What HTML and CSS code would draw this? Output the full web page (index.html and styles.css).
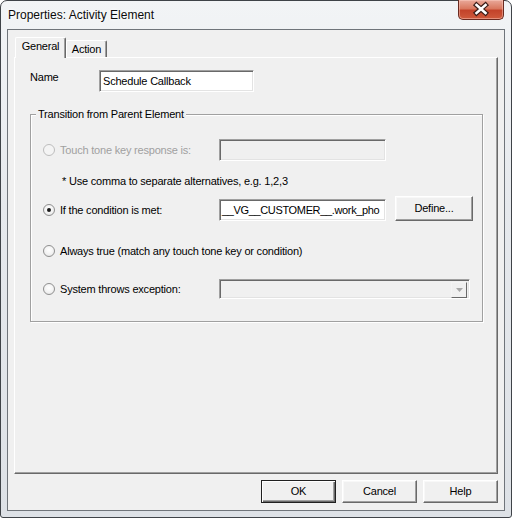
FILE: index.html
```html
<!DOCTYPE html>
<html>
<head>
<meta charset="utf-8">
<link rel="stylesheet" href="styles.css">
</head>
<body>
<div class="window">
  <div class="titlebar">
    <span class="title">Properties: Activity Element</span>
    <div class="close">
      <svg width="46" height="20" viewBox="0 0 46 20">
        <path d="M18.5 6 L27.5 14 M27.5 6 L18.5 14" stroke="#3b1d18" stroke-width="5" stroke-linecap="square"/>
        <path d="M18.5 6 L27.5 14 M27.5 6 L18.5 14" stroke="#ffffff" stroke-width="2.6" stroke-linecap="square"/>
      </svg>
    </div>
  </div>
  <div class="client">
    <div class="tabs">
      <div class="tab active">General</div>
      <div class="tab">Action</div>
    </div>
    <div class="panel">
      <div class="name-row">
        <span class="name-label">Name</span>
        <div class="field name-field">Schedule Callback</div>
      </div>
      <fieldset class="group">
        <legend>Transition from Parent Element</legend>
        <div class="row disabled">
          <span class="opt"><span class="radio"></span>Touch tone key response is:</span>
          <div class="field field-off wide"></div>
        </div>
        <div class="note">* Use comma to separate alternatives, e.g. 1,2,3</div>
        <div class="row row-end">
          <span class="opt opt-tall"><span class="radio checked"></span>If the condition is met:</span>
          <div class="field wide cond">__VG__CUSTOMER__.work_pho</div>
          <div class="btn define">Define...</div>
        </div>
        <div class="row row-gap">
          <span class="opt opt-free"><span class="radio"></span>Always true (match any touch tone key or condition)</span>
        </div>
        <div class="row row-last">
          <span class="opt"><span class="radio"></span>System throws exception:</span>
          <div class="field field-off combo">
            <span class="combo-btn"><svg width="7" height="4" viewBox="0 0 7 4"><path d="M0 0 H7 L3.5 4 Z" fill="#a8a8a8"/></svg></span>
          </div>
        </div>
      </fieldset>
    </div>
    <div class="buttons">
      <div class="btn btn-default">OK</div>
      <div class="btn">Cancel</div>
      <div class="btn">Help</div>
    </div>
  </div>
</div>
</body>
</html>
```
FILE: styles.css
```css
* { box-sizing: border-box; }
html, body { margin: 0; padding: 0; }
body {
  width: 512px;
  height: 518px;
  background: #ffffff;
  font-family: "Liberation Sans", Arial, sans-serif;
  font-size: 11px;
  color: #000;
}
.window {
  width: 512px;
  height: 518px;
  border: 1px solid #3f4348;
  border-radius: 7px 7px 3px 3px;
  background: linear-gradient(180deg, #f2f4f6 0%, #e6e9ed 40%, #dde1e6 100%);
  display: flex;
  flex-direction: column;
  padding: 0 6px 6px 6px;
}
.titlebar {
  height: 28px;
  display: flex;
  justify-content: space-between;
  align-items: flex-start;
  flex: none;
}
.title {
  margin-top: 7px;
  padding-left: 1px;
  font-size: 12px;
  line-height: 14px;
  color: #0b0b0b;
  text-shadow: 0 0 6px #ffffff, 0 0 3px #ffffff;
}
.close {
  width: 46px;
  height: 20px;
  margin-top: -1px;
  margin-right: 1px;
  border: 1px solid #6a2a20;
  border-top: none;
  border-radius: 0 0 5px 5px;
  background: linear-gradient(180deg, #e9a99a 0%, #d9785f 45%, #c3432a 55%, #cf5a3c 100%);
  box-shadow: inset 0 0 0 1px rgba(255,210,200,0.45);
  overflow: hidden;
}
.close svg { display: block; margin: -1px 0 0 -1px; }
.client {
  flex: 1;
  display: flex;
  flex-direction: column;
  background: #f0f0f0;
  border: 1px solid #6f747a;
  padding: 7px 6px 7px 6px;
  letter-spacing: -0.2px;
}
.tabs {
  height: 20px;
  display: flex;
  align-items: flex-end;
  padding-left: 1px;
  position: relative;
  z-index: 1;
  flex: none;
}
.tab {
  width: 41px;
  height: 17px;
  border: 1px solid;
  border-color: #ffffff #696969 transparent #ffffff;
  border-bottom: none;
  border-radius: 2px 2px 0 0;
  background: #f0f0f0;
  text-align: center;
  line-height: 16px;
  box-shadow: inset -1px 0 0 #a0a0a0;
}
.tab.active {
  width: 51px;
  height: 21px;
  margin-bottom: -1px;
  line-height: 17px;
}
.panel {
  flex: 1;
  border: 1px solid;
  border-color: #ffffff #696969 #696969 #ffffff;
  box-shadow: inset -1px -1px 0 #a0a0a0;
  padding: 12px 14px 0 15px;
}
.name-row {
  display: flex;
  align-items: flex-start;
}
.name-label {
  width: 69px;
  line-height: 13px;
  padding-top: 1px;
}
.field {
  height: 22px;
  background: #ffffff;
  border: 1px solid;
  border-color: #a0a0a0 #ffffff #ffffff #a0a0a0;
  box-shadow: inset 1px 1px 0 #696969, inset -1px -1px 0 #e3e3e3;
  padding: 0 0 0 3px;
  line-height: 20px;
  white-space: nowrap;
  overflow: hidden;
}
.name-field { width: 155px; }
.field-off { background: #f0f0f0; }
.wide { width: 167px; }
.cond { padding-left: 2px; letter-spacing: -0.35px; }
.group {
  margin: 16px 0 0 0;
  padding: 16px 0 21px 0;
  border: 1px solid #a0a0a0;
  box-shadow: 1px 1px 0 #ffffff, inset 1px 1px 0 #ffffff;
  min-width: 0;
}
.group legend {
  margin-left: 5px;
  padding: 0 2px;
  line-height: 13px;
  background: #f0f0f0;
}
.row {
  display: flex;
  align-items: center;
  height: 26px;
  padding-left: 12px;
}
.row-end { align-items: flex-end; height: 25px; margin-top: 8px; }
.row-gap { margin-top: 17px; }
.row-last { height: 22px; margin-top: 14px; }
.opt {
  width: 176px;
  display: flex;
  align-items: center;
  white-space: nowrap;
  flex: none;
}
.opt-tall { height: 22px; }
.opt-free { width: auto; }
.disabled .opt { color: #a0a0a0; }
.radio {
  width: 12px;
  height: 12px;
  margin-right: 5px;
  border-radius: 50%;
  border: 1px solid #8f8f8f;
  background: radial-gradient(circle at 50% 40%, #ffffff 0%, #f2f2f2 55%, #dcdcdc 100%);
  position: relative;
  flex: none;
}
.disabled .radio {
  border-color: #bdbdbd;
  background: #f4f4f4;
}
.radio.checked::after {
  content: "";
  position: absolute;
  left: 3px;
  top: 3px;
  width: 4px;
  height: 4px;
  border-radius: 50%;
  background: #1a1a1a;
}
.note {
  margin: 11px 0 0 31px;
  line-height: 14px;
}
.btn {
  width: 75px;
  height: 23px;
  background: #f0f0f0;
  border: 1px solid;
  border-color: #ffffff #696969 #696969 #ffffff;
  box-shadow: inset -1px -1px 0 #a0a0a0, inset 1px 1px 0 #f8f8f8;
  text-align: center;
  line-height: 20px;
  flex: none;
}
.define {
  width: 78px;
  height: 25px;
  line-height: 22px;
  margin-left: 9px;
  align-self: flex-end;
}
.combo {
  width: 251px;
  height: 20px;
  display: flex;
  justify-content: flex-end;
  padding: 2px 2px 2px 0;
}
.combo-btn {
  width: 16px;
  height: 16px;
  background: #f0f0f0;
  border: 1px solid;
  border-color: #f4f4f4 #696969 #696969 #f4f4f4;
  display: flex;
  align-items: center;
  justify-content: center;
}
.buttons {
  display: flex;
  justify-content: flex-end;
  gap: 6px;
  margin-top: 6px;
  flex: none;
}
.btn-default {
  border-color: #202020;
  box-shadow: inset 1px 1px 0 #ffffff, inset -1px -1px 0 #696969, inset -2px -2px 0 #a0a0a0;
}
```
